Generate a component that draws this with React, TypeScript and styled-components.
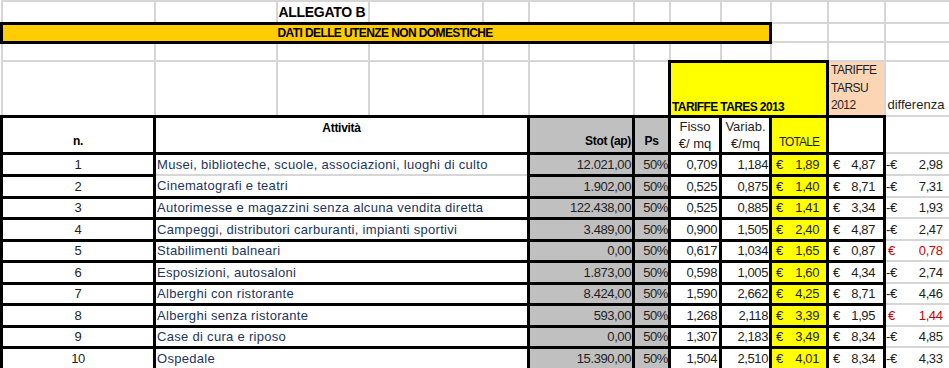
import React from 'react';
import styled, { createGlobalStyle, css } from 'styled-components';

const GRID = '#d6d6d6';
const BAND = '#ffcc00';
const YELLOW = '#ffff00';
const PEACH = '#fcd5b4';
const GRAY = '#c0c0c0';
const NAVY = '#1c3560';
const INK = '#1e1e1e';
const RED = '#d00000';

const GlobalStyle = createGlobalStyle`
  html, body { margin: 0; padding: 0; background: #fff; }
  body { font-family: "Liberation Sans", Arial, sans-serif; overflow: hidden; }
`;

const COLS = [153, 122, 92, 114, 46, 105, 36, 51, 50, 57, 57, 66];

const Sheet = styled.table`
  border-collapse: collapse;
  table-layout: fixed;
  width: 949px;
  font-family: "Liberation Sans", Arial, sans-serif;
  font-size: 13px;
  color: ${INK};
`;

const Col = styled.col<{ $w: number }>`
  width: ${(p) => p.$w}px;
`;

const Row = styled.tr<{ $h: number }>`
  height: ${(p) => p.$h}px;
`;

type CellProps = {
  $ink?: boolean;
  $fill?: string;
  $align?: 'left' | 'center' | 'right';
  $valign?: 'top' | 'middle' | 'bottom';
  $open?: 'left' | 'right' | 'both';
  $soft?: 'top' | 'bottom';
  $pad?: string;
};

const Cell = styled.td<CellProps>`
  padding: ${(p) => p.$pad ?? '0 2px'};
  border: ${(p) => (p.$ink ? '3px solid #000' : `2px solid ${GRID}`)};
  background: ${(p) => p.$fill ?? 'transparent'};
  text-align: ${(p) => p.$align ?? 'left'};
  vertical-align: ${(p) => p.$valign ?? 'bottom'};
  white-space: nowrap;
  overflow: visible;
  line-height: 15px;
  ${(p) =>
    (p.$open === 'left' || p.$open === 'both') &&
    css`
      border-left: none;
    `}
  ${(p) =>
    (p.$open === 'right' || p.$open === 'both') &&
    css`
      border-right: none;
    `}
  ${(p) =>
    p.$soft === 'bottom' &&
    css`
      border-bottom: 2px solid ${GRID};
    `}
  ${(p) =>
    p.$soft === 'top' &&
    css`
      border-top: 2px solid ${GRID};
    `}
`;

const Title = styled.span`
  font-weight: 700;
  font-size: 14px;
  letter-spacing: -0.3px;
  color: #000;
`;

const BandTitle = styled.span`
  font-weight: 700;
  font-size: 12px;
  letter-spacing: -0.6px;
  color: #000;
`;

const GroupTitle = styled.span`
  font-weight: 700;
  font-size: 12px;
  letter-spacing: -0.6px;
  color: #000;
`;

const HeadBold = styled.span`
  font-weight: 700;
  font-size: 12px;
  letter-spacing: -0.3px;
  color: #000;
`;

const Stacked = styled.div<{ $lh: number; $size: number; $track: number }>`
  font-size: ${(p) => p.$size}px;
  line-height: ${(p) => p.$lh}px;
  letter-spacing: ${(p) => p.$track}px;
  white-space: pre;
  color: ${INK};
`;

const Caps = styled.span`
  font-size: 12px;
  letter-spacing: -0.9px;
  color: ${INK};
`;

const Plain = styled.span`
  font-size: 13px;
  color: ${INK};
`;

const Activity = styled.span`
  font-size: 13px;
  letter-spacing: 0.3px;
  color: ${NAVY};
`;

const Num = styled.span`
  font-size: 13px;
  letter-spacing: -0.4px;
  color: ${INK};
`;

const Money = styled.div<{ $red?: boolean; $l: number; $r: number }>`
  display: flex;
  justify-content: space-between;
  padding: 0 ${(p) => p.$r}px 0 ${(p) => p.$l}px;
  font-size: 13px;
  letter-spacing: -0.4px;
  color: ${(p) => (p.$red ? RED : INK)};
`;

type Entry = {
  n: number;
  act: string;
  stot: string;
  fisso: string;
  variab: string;
  tot: string;
  tarsu: string;
  diff: string;
  red?: boolean;
  h: number;
};

const DATA: Entry[] = [
  { n: 1, act: 'Musei, biblioteche, scuole, associazioni, luoghi di culto', stot: '12.021,00', fisso: '0,709', variab: '1,184', tot: '1,89', tarsu: '4,87', diff: '2,98', h: 22 },
  { n: 2, act: 'Cinematografi e teatri', stot: '1.902,00', fisso: '0,525', variab: '0,875', tot: '1,40', tarsu: '8,71', diff: '7,31', h: 22 },
  { n: 3, act: 'Autorimesse e magazzini senza alcuna vendita diretta', stot: '122.438,00', fisso: '0,525', variab: '0,885', tot: '1,41', tarsu: '3,34', diff: '1,93', h: 21 },
  { n: 4, act: 'Campeggi, distributori carburanti, impianti sportivi', stot: '3.489,00', fisso: '0,900', variab: '1,505', tot: '2,40', tarsu: '4,87', diff: '2,47', h: 22 },
  { n: 5, act: 'Stabilimenti balneari', stot: '0,00', fisso: '0,617', variab: '1,034', tot: '1,65', tarsu: '0,87', diff: '0,78', red: true, h: 21 },
  { n: 6, act: 'Esposizioni, autosaloni', stot: '1.873,00', fisso: '0,598', variab: '1,005', tot: '1,60', tarsu: '4,34', diff: '2,74', h: 22 },
  { n: 7, act: 'Alberghi con ristorante', stot: '8.424,00', fisso: '1,590', variab: '2,662', tot: '4,25', tarsu: '8,71', diff: '4,46', h: 21 },
  { n: 8, act: 'Alberghi senza ristorante', stot: '593,00', fisso: '1,268', variab: '2,118', tot: '3,39', tarsu: '1,95', diff: '1,44', red: true, h: 22 },
  { n: 9, act: 'Case di cura e riposo', stot: '0,00', fisso: '1,307', variab: '2,183', tot: '3,49', tarsu: '8,34', diff: '4,85', h: 21 },
  { n: 10, act: 'Ospedale', stot: '15.390,00', fisso: '1,504', variab: '2,510', tot: '4,01', tarsu: '8,34', diff: '4,33', h: 22 },
];

const blanks = (count: number, prefix: string) =>
  Array.from({ length: count }, (_, i) => <Cell key={`${prefix}${i}`} />);

export default function App() {
  return (
    <>
      <GlobalStyle />
      <Sheet>
        <colgroup>
          {COLS.map((w, i) => (
            <Col key={i} $w={w} />
          ))}
        </colgroup>
        <tbody>
          <Row $h={22}>
            {blanks(2, 'a')}
            <Cell $pad="0 1px 2px">
              <Title>ALLEGATO B</Title>
            </Cell>
            {blanks(9, 'b')}
          </Row>
          <Row $h={19}>
            <Cell $ink $fill={BAND} $open="right" />
            <Cell $ink $fill={BAND} $open="both" />
            <Cell $ink $fill={BAND} $open="left" colSpan={7} $valign="middle" $pad="0 1px">
              <BandTitle>DATI DELLE UTENZE NON DOMESTICHE</BandTitle>
            </Cell>
            {blanks(3, 'c')}
          </Row>
          <Row $h={19}>{blanks(12, 'd')}</Row>
          <Row $h={53}>
            {blanks(7, 'e')}
            <Cell $ink $fill={YELLOW} colSpan={3} $pad="0 1px 0">
              <GroupTitle>TARIFFE TARES 2013</GroupTitle>
            </Cell>
            <Cell $fill={PEACH} $valign="top" $pad="0 2px">
              <Stacked $lh={17.5} $size={12} $track={-0.5}>
                {'TARIFFE\nTARSU\n2012'}
              </Stacked>
            </Cell>
            <Cell $pad="0 2px 3px">
              <Plain>differenza</Plain>
            </Cell>
          </Row>
          <Row $h={37}>
            <Cell $ink $align="center" $pad="0 2px 3px">
              <HeadBold>n.</HeadBold>
            </Cell>
            <Cell $ink colSpan={4} $align="center" $valign="top" $pad="2px 2px 0">
              <HeadBold>Attività</HeadBold>
            </Cell>
            <Cell $ink $fill={GRAY} $align="right" $pad="0 1px 3px">
              <HeadBold>Stot (ap)</HeadBold>
            </Cell>
            <Cell $ink $fill={GRAY} $align="center" $pad="0 0 3px">
              <HeadBold>Ps</HeadBold>
            </Cell>
            <Cell $ink $align="center" $valign="middle" $pad="0">
              <Stacked $lh={17} $size={13} $track={0}>
                {'Fisso\n€/ mq'}
              </Stacked>
            </Cell>
            <Cell $ink $align="center" $valign="middle" $pad="0">
              <Stacked $lh={17} $size={13} $track={0}>
                {'Variab.\n€/mq'}
              </Stacked>
            </Cell>
            <Cell $ink $fill={YELLOW} $align="center" $pad="0 0 2px">
              <Caps>TOTALE</Caps>
            </Cell>
            <Cell $ink />
            <Cell />
          </Row>
          {DATA.map((d, i) => (
            <Row key={d.n} $h={d.h}>
              <Cell $ink $align="center" $valign="middle">
                <Num>{d.n}</Num>
              </Cell>
              <Cell
                $ink
                colSpan={4}
                $valign="middle"
                $pad="0 1px"
                $soft={i === 0 ? 'bottom' : i === 1 ? 'top' : undefined}
              >
                <Activity>{d.act}</Activity>
              </Cell>
              <Cell $ink $fill={GRAY} $align="right" $valign="middle" $pad="0 1px">
                <Num>{d.stot}</Num>
              </Cell>
              <Cell $ink $fill={GRAY} $align="right" $valign="middle" $pad="0">
                <Num>50%</Num>
              </Cell>
              <Cell $ink $align="right" $valign="middle" $pad="0 2px">
                <Num>{d.fisso}</Num>
              </Cell>
              <Cell $ink $align="right" $valign="middle" $pad="0 1px">
                <Num>{d.variab}</Num>
              </Cell>
              <Cell $ink $fill={YELLOW} $valign="middle" $pad="0">
                <Money $l={4} $r={7}>
                  <span>€</span>
                  <span>{d.tot}</span>
                </Money>
              </Cell>
              <Cell $ink $valign="middle" $pad="0">
                <Money $l={4} $r={8}>
                  <span>€</span>
                  <span>{d.tarsu}</span>
                </Money>
              </Cell>
              <Cell $valign="middle" $pad="0">
                <Money $red={d.red} $l={d.red ? 2 : 0} $r={7}>
                  <span>{d.red ? '€' : '-€'}</span>
                  <span>{d.diff}</span>
                </Money>
              </Cell>
            </Row>
          ))}
        </tbody>
      </Sheet>
    </>
  );
}
